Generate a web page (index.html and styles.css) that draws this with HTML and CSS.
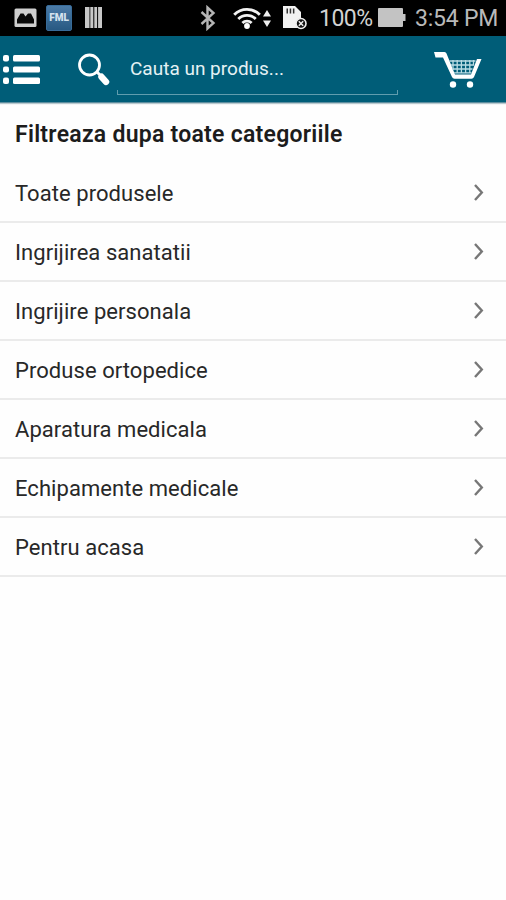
FILE: index.html
```html
<!DOCTYPE html>
<html lang="ro">
<head>
<meta charset="utf-8">
<title>Categorii</title>
<link rel="stylesheet" href="styles.css">
</head>
<body>
<div class="status">
  <svg class="picture" width="23" height="20" viewBox="0 0 23 20"><rect x="0.500" y="0.500" width="22" height="18.500" rx="1.500" fill="#cfcfcf"/><path d="M3 15.500V11.500L6.500 5.500h3L11.500 8.500 14 5.500h3l3 6v4z" fill="#0a0a0a"/></svg>
  <span class="app">FML</span>
  <svg class="bars" width="17" height="22" viewBox="0 0 17 22"><path fill="#c8c8c8" d="M0 0h4.500v21H0zM5.300 0h3v21h-3zM9.300 0h2.800v21H9.300zM13.100 0H17v21h-3.900z"/></svg>
  <svg class="bluetooth" width="16" height="26" viewBox="0 0 16 26"><path d="M1.500 7l12 11-6 5.500v-21L13.500 8l-12 11" fill="none" stroke="#b5b5b5" stroke-width="2.400"/></svg>
  <svg class="wifi" width="39" height="24" viewBox="0 0 39 24"><g fill="none" stroke="#f2f2f2" stroke-width="2.900"><path d="M1.200 8.700a18 18 0 0 1 25.600 0M5.300 13a12.300 12.300 0 0 1 17.400 0M9.400 17a6.600 6.600 0 0 1 9.200 0"/></g><circle cx="14" cy="20" r="2.900" fill="#fff"/><path d="M30 10.500l4-6.500 4 6.500zM30 14.500h8L34 21z" fill="#eee"/></svg>
  <svg class="sd" width="25" height="24" viewBox="0 0 25 24"><path d="M0 0h12l6 6v16H0z" fill="#f2f2f2"/><path d="M3.500 2.500h1.500v5h-1.500zM6.700 2.500h1.500v5H6.700zM9.900 2.500h1.500v5H9.900z" fill="#333"/><circle cx="18" cy="17.500" r="5" fill="#111" stroke="#eee" stroke-width="1.600"/><path d="M15.800 15.300l4.400 4.400m0-4.400l-4.400 4.400" stroke="#eee" stroke-width="1.500"/></svg>
  <span class="percent">100%</span>
  <svg class="battery" width="28" height="20" viewBox="0 0 28 20"><path d="M1 0h23q1 0 1 1v5h2.500v7H25v5q0 1-1 1H1q-1 0-1-1V1q0-1 1-1z" fill="#c3c3c3"/></svg>
  <span class="time">3:54 PM</span>
</div>
<header class="bar">
  <svg class="menu" width="38" height="32" viewBox="0 0 38 32"><g fill="#fff"><rect y="1" width="6" height="6.500" rx="2"/><rect x="10" y="1" width="27" height="6.500" rx="1.500"/><rect y="12.500" width="6" height="6" rx="2"/><rect x="10" y="12.500" width="27" height="6" rx="1.500"/><rect y="23.500" width="6" height="6.500" rx="2"/><rect x="10" y="23.500" width="27" height="6.500" rx="1.500"/></g></svg>
  <svg class="search" width="32" height="34" viewBox="0 0 32 34"><circle cx="11.500" cy="12" r="10" fill="none" stroke="#fff" stroke-width="2.800"/><path d="M18.500 18.500l4 4" stroke="#fff" stroke-width="3"/><path d="M23.500 23.800l4.500 5" stroke="#fff" stroke-width="6.500" stroke-linecap="round"/></svg>
  <div class="field"><span class="hint">Cauta un produs...</span></div>
  <svg class="cart" width="48" height="38" viewBox="0 0 48 38"><path d="M0 0h10.500q1.500 0 2 1.500L21 22.500h16L43 7h4.500L40 25q-.7 1.800-2.500 1.800H20.500q-1.800 0-2.500-1.800L9 5.500H1.500z" fill="#fff"/><path d="M15.500 9h26M17 13h23M18.500 17h20M19 8v10M23.200 8v13M27.400 8v13M31.600 8v13M35.800 8v13M39.500 8v5M20 20.800h17.500" fill="none" stroke="#b9dce4" stroke-width="1.300"/><circle cx="19" cy="32.500" r="3.200" fill="#fff"/><circle cx="36" cy="32.500" r="3.200" fill="#fff"/></svg>
</header>
<main>
  <h1 class="title"><span>Filtreaza dupa toate categoriile</span></h1>
  <ul class="list">
    <li class="row"><span>Toate produsele</span><svg class="chev" width="12" height="20" viewBox="0 0 12 20"><path d="M2 2l6.800 7.500L2 17"/></svg></li>
    <li class="row"><span>Ingrijirea sanatatii</span><svg class="chev" width="12" height="20" viewBox="0 0 12 20"><path d="M2 2l6.800 7.500L2 17"/></svg></li>
    <li class="row"><span>Ingrijire personala</span><svg class="chev" width="12" height="20" viewBox="0 0 12 20"><path d="M2 2l6.800 7.500L2 17"/></svg></li>
    <li class="row"><span>Produse ortopedice</span><svg class="chev" width="12" height="20" viewBox="0 0 12 20"><path d="M2 2l6.800 7.500L2 17"/></svg></li>
    <li class="row"><span>Aparatura medicala</span><svg class="chev" width="12" height="20" viewBox="0 0 12 20"><path d="M2 2l6.800 7.500L2 17"/></svg></li>
    <li class="row"><span>Echipamente medicale</span><svg class="chev" width="12" height="20" viewBox="0 0 12 20"><path d="M2 2l6.800 7.500L2 17"/></svg></li>
    <li class="row"><span>Pentru acasa</span><svg class="chev" width="12" height="20" viewBox="0 0 12 20"><path d="M2 2l6.800 7.500L2 17"/></svg></li>
  </ul>
</main>
</body>
</html>
```
FILE: styles.css
```css
* { box-sizing: border-box; }
body { margin: 0; min-height: 900px; background: #fefefe; font-family: Roboto, sans-serif; color: #1c1c1c; overflow: hidden; }
svg { display: block; flex: none; }
span { white-space: nowrap; }
.status { height: 36px; background: #000; display: flex; align-items: center; color: #d2d2d2; padding-left: 14px; }
.app { width: 26px; height: 26px; margin-left: 9px; background: linear-gradient(#4b7ba7, #285982); border: 1px solid #386b98; border-radius: 2px; font-size: 10px; font-weight: 900; line-height: 24px; text-align: center; color: #d5e2ee; }
.bars { margin-left: 13px; }
.bluetooth { margin-left: 98px; }
.wifi { margin-left: 17px; }
.sd { margin-left: 11px; }
.percent { width: 54px; margin-left: 11px; font-size: 23px; letter-spacing: -0.5px; }
.battery { margin-left: 5px; }
.time { margin-left: 9px; font-size: 23px; color: #b9b9b9; letter-spacing: -0.2px; }
.bar { height: 67px; background: #005d78; border-bottom: 1px solid #5d8e9f; box-shadow: 0 1px 1px #b9c9ce; display: flex; align-items: flex-start; }
.menu { margin: 18px 0 0 3px; }
.search { margin: 17px 0 0 37px; }
.field { width: 281px; height: 43px; margin: 16px 0 0 7px; padding: 5px 0 0 13px; border-bottom: 1px solid #609dae; display: flex; background: linear-gradient(#609dae, #609dae) left bottom / 1px 4px no-repeat, linear-gradient(#609dae, #609dae) right bottom / 1px 4px no-repeat; }
.hint { font-size: 19px; line-height: 24px; color: #e4f1f4; }
.cart { margin: 16px 0 0 36px; }
.title { margin: 0; height: 61px; padding: 18px 0 0 15px; font-size: 23px; line-height: 28px; font-weight: 600; letter-spacing: 0.26px; }
.list { margin: 0; padding: 0; list-style: none; }
.row { height: 59px; padding: 1px 21px 0 15px; border-bottom: 2px solid #ebebeb; display: flex; align-items: center; justify-content: space-between; font-size: 22px; letter-spacing: 0.06px; color: #282828; }
.chev path { fill: none; stroke: #777; stroke-width: 2.400; }
```
